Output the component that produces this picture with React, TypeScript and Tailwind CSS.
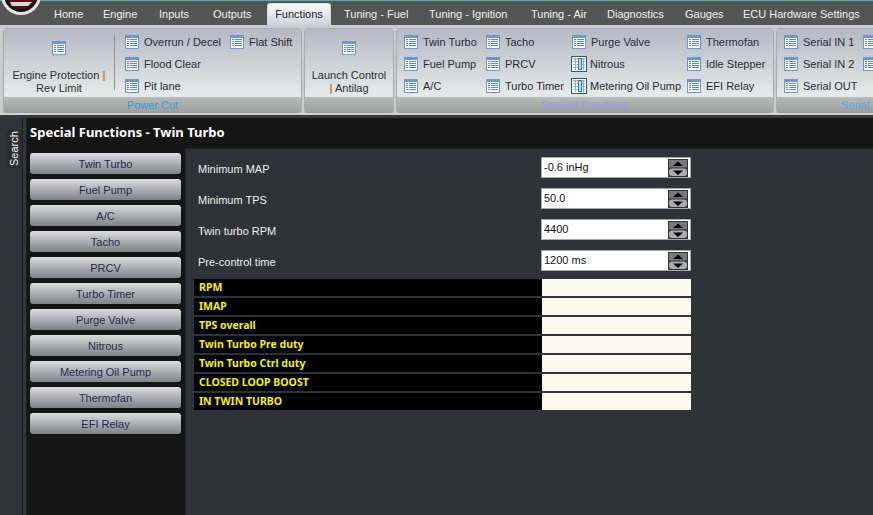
import React from "react";

const font = { fontFamily: '"Liberation Sans", Tahoma, sans-serif' };
const bold = { fontFamily: '"Noto Sans", Tahoma, sans-serif' };

function ListIcon() {
  return (
    <svg width="14" height="14" viewBox="0 0 14 14" className="shrink-0">
      <rect x="0" y="0" width="14" height="14" fill="#6f95cf" />
      <rect x="1" y="3" width="12" height="10" fill="#fbfdff" />
      <rect x="2" y="4" width="2" height="1" fill="#5f88c8" />
      <rect x="5" y="4" width="7" height="1" fill="#5f88c8" />
      <rect x="2" y="6" width="2" height="1" fill="#5f88c8" />
      <rect x="5" y="6" width="7" height="1" fill="#5f88c8" />
      <rect x="2" y="8" width="2" height="1" fill="#5f88c8" />
      <rect x="5" y="8" width="7" height="1" fill="#5f88c8" />
      <rect x="2" y="10" width="2" height="1" fill="#5f88c8" />
      <rect x="5" y="10" width="7" height="1" fill="#5f88c8" />
    </svg>
  );
}

function TableIcon() {
  return (
    <svg width="16" height="16" viewBox="0 0 16 16" className="shrink-0">
      <rect x="0.5" y="0.5" width="15" height="15" fill="#fdfdf6" stroke="#1f5f8f" />
      <rect x="2" y="2" width="12" height="1.5" fill="#e8b24a" />
      <rect x="2" y="5" width="12" height="1" fill="#9cc0dc" />
      <rect x="2" y="8" width="12" height="1" fill="#9cc0dc" />
      <rect x="2" y="11" width="12" height="1" fill="#9cc0dc" />
      <rect x="4" y="2" width="1" height="12" fill="#7fb0d4" />
      <rect x="7" y="2" width="4" height="12" fill="#2f77b4" />
      <rect x="8" y="3" width="2" height="10" fill="#bcd8ec" />
      <rect x="12" y="2" width="1" height="12" fill="#7fb0d4" />
    </svg>
  );
}

function Spinner() {
  return (
    <svg width="20" height="18" viewBox="0 0 20 18" className="shrink-0">
      <rect width="20" height="18" fill="#333438" />
      <rect x="1" y="1" width="18" height="7.5" fill="#77797d" />
      <rect x="1" y="9.5" width="18" height="7.5" rx="3" fill="#a9abae" />
      <path d="M10 2.5 L15 7 L5 7 Z" fill="#000" />
      <path d="M10 16 L15 11.5 L5 11.5 Z" fill="#000" />
    </svg>
  );
}

function Item({ label, table }: { label: string; table?: boolean }) {
  return (
    <div className="flex h-[22px] items-center whitespace-nowrap">
      {table ? (
        <span className="-ml-px mr-[3px] flex">
          <TableIcon />
        </span>
      ) : (
        <span className="mr-[5px] flex">
          <ListIcon />
        </span>
      )}
      <span>{label}</span>
    </div>
  );
}

function Col({ className, children }: { className: string; children: React.ReactNode }) {
  return <div className={`flex flex-col ${className}`}>{children}</div>;
}

function Group({
  className,
  title,
  titleClass,
  children,
}: {
  className: string;
  title: string;
  titleClass: string;
  children: React.ReactNode;
}) {
  return (
    <div
      className={`flex h-[86px] shrink-0 flex-col overflow-hidden rounded-[4px] border border-[#a9adb0] ${className}`}
    >
      <div className="flex h-[68px] bg-gradient-to-b from-[#b4b9c3] to-[#e6ebea]">{children}</div>
      <div className={`flex h-[16px] items-center justify-center overflow-hidden whitespace-nowrap bg-gradient-to-b from-[#b9bbb9] to-[#9c9e9e] text-[11px] leading-none ${titleClass}`}>
        {title}
      </div>
    </div>
  );
}

function Big({ lines }: { lines: React.ReactNode }) {
  return (
    <div className="flex w-full flex-col items-center pt-[12px] text-center leading-[13px]">
      <ListIcon />
      <div className="mt-[14px]">{lines}</div>
    </div>
  );
}

const sideButtons = [
  "Twin Turbo",
  "Fuel Pump",
  "A/C",
  "Tacho",
  "PRCV",
  "Turbo Timer",
  "Purge Valve",
  "Nitrous",
  "Metering Oil Pump",
  "Thermofan",
  "EFI Relay",
];

const fields = [
  ["Minimum MAP", "-0.6 inHg"],
  ["Minimum TPS", "50.0"],
  ["Twin turbo RPM", "4400"],
  ["Pre-control time", "1200 ms"],
];

const rows = [
  "RPM",
  "IMAP",
  "TPS overall",
  "Twin Turbo Pre duty",
  "Twin Turbo Ctrl duty",
  "CLOSED LOOP BOOST",
  "IN TWIN TURBO",
];

const tabs: [string, string][] = [
  ["Home", "w-[49px]"],
  ["Engine", "w-[56px]"],
  ["Inputs", "w-[54px]"],
  ["Outputs", "w-[54px]"],
];

const tabsRight: [string, string][] = [
  ["Tuning - Fuel", "w-[85px]"],
  ["Tuning - Ignition", "w-[102px]"],
  ["Tuning - Air", "w-[76px]"],
  ["Diagnostics", "w-[78px]"],
  ["Gauges", "w-[58px]"],
  ["ECU Hardware Settings", "w-[125px]"],
];

export default function App() {
  return (
    <div
      style={font}
      className="relative flex h-[515px] w-[873px] flex-col overflow-hidden bg-[#2f3238] text-[11px] text-[#2b2b35]"
    >
      <div className="h-px shrink-0 bg-[#3fb8b8]" />

      <svg width="44" height="16" viewBox="0 0 44 16" className="absolute left-0 top-0">
        <circle cx="21" cy="-5" r="20" fill="#e4e4e4" />
        <circle cx="21" cy="-5" r="17" fill="#1c1012" />
        <circle cx="21" cy="-5" r="14" fill="#5a0f16" />
        <path d="M10 2 H32 L28 6 H12 Z" fill="#d8d8d8" />
      </svg>

      <div className="flex h-[24px] shrink-0 items-end bg-[#555555] pl-[54px] text-[#f2f2ea]">
        {tabs.map(([t, w]) => (
          <div key={t} className={`flex h-[22px] items-center whitespace-nowrap ${w}`}>
            {t}
          </div>
        ))}
        <div className="flex h-[22px] w-[64px] items-center justify-center rounded-t-[3px] border border-b-0 border-[#d4d6d8] bg-gradient-to-b from-[#fafbfc] to-[#ccd2dc] text-[#20222a]">
          Functions
        </div>
        <div className="w-[13px]" />
        {tabsRight.map(([t, w]) => (
          <div key={t} className={`flex h-[22px] items-center whitespace-nowrap ${w}`}>
            {t}
          </div>
        ))}
      </div>

      <div className="flex h-[90px] shrink-0 gap-[2px] overflow-hidden border-b-[2px] border-[#cfd1d2] bg-[#c9cbcd] pl-[3px] pt-[3px]">
        <Group className="w-[299px]" title="Power Cut" titleClass="text-[#2f9ae0]">
          <div className="w-[110px]">
            <Big
              lines={
                <>
                  Engine Protection <span className="font-bold text-[#c98a2e]">|</span>
                  <br />
                  Rev Limit
                </>
              }
            />
          </div>
          <div className="mt-[6px] h-[55px] w-px bg-[#8f9296]" />
          <Col className="ml-[10px] w-[105px] pt-[2px]">
            <Item label="Overrun / Decel" />
            <Item label="Flood Clear" />
            <Item label="Pit lane" />
          </Col>
          <Col className="pt-[2px]">
            <Item label="Flat Shift" />
          </Col>
        </Group>

        <Group className="w-[90px]" title="" titleClass="">
          <Big
            lines={
              <>
                Launch Control
                <br />
                <span className="font-bold text-[#c98a2e]">|</span> Antilag
              </>
            }
          />
        </Group>

        <Group className="w-[378px]" title="Special Functions" titleClass="text-[#9a9ae8]">
          <Col className="ml-[7px] w-[82px] pt-[2px]">
            <Item label="Twin Turbo" />
            <Item label="Fuel Pump" />
            <Item label="A/C" />
          </Col>
          <Col className="w-[86px] pt-[2px]">
            <Item label="Tacho" />
            <Item label="PRCV" />
            <Item label="Turbo Timer" />
          </Col>
          <Col className="w-[115px] pt-[2px]">
            <Item label="Purge Valve" />
            <Item label="Nitrous" table />
            <Item label="Metering Oil Pump" table />
          </Col>
          <Col className="pt-[2px]">
            <Item label="Thermofan" />
            <Item label="Idle Stepper" />
            <Item label="EFI Relay" />
          </Col>
        </Group>

        <Group className="w-[200px]" title="Serial" titleClass="justify-start pl-[64px] text-[#5ea4ee]">
          <Col className="ml-[7px] w-[79px] pt-[2px]">
            <Item label="Serial IN 1" />
            <Item label="Serial IN 2" />
            <Item label="Serial OUT" />
          </Col>
          <Col className="pt-[2px]">
            <div className="flex h-[22px] items-center">
              <ListIcon />
            </div>
            <div className="flex h-[22px] items-center">
              <ListIcon />
            </div>
          </Col>
        </Group>
      </div>

      <div className="h-[3px] shrink-0 bg-[#38393b]" />

      <div className="flex min-h-0 flex-1">
        <div className="flex w-[22px] shrink-0 flex-col items-end bg-[#30333a] pt-[12px]">
          <div className="flex h-[38px] w-[16px] rotate-180 items-center justify-center bg-[#2a2d32] text-[11px] text-[#f0f0f0] [writing-mode:vertical-rl]">
            Search
          </div>
        </div>
        <div className="w-[5px] shrink-0 border-l border-r border-[#1c1d20] bg-[#33363c]" />
        <div className="flex min-w-0 flex-1 flex-col bg-[#151515]">
          <div style={bold} className="flex h-[30px] shrink-0 items-center pl-[3px] text-[13px] font-bold text-white">
            Special Functions - Twin Turbo
          </div>
          <div className="flex min-h-0 flex-1">
            <div className="flex w-[158px] shrink-0 flex-col gap-[5px] pl-[3px] pt-[5px]">
              {sideButtons.map((b) => (
                <div
                  key={b}
                  className="flex h-[21px] w-[151px] items-center justify-center rounded-[3px] bg-gradient-to-b from-[#dcdde0] to-[#7f8189] pt-[2px] text-[#27284a]"
                >
                  {b}
                </div>
              ))}
            </div>
            <div className="min-w-0 flex-1 border-l border-t border-[#25272b] bg-[#2f3238] pl-[8px] pt-[8px]">
              <div className="flex flex-col gap-[10px]">
                {fields.map(([l, v]) => (
                  <div key={l} className="flex h-[21px] items-center pl-[4px]">
                    <div className="w-[343px] pt-[3px] text-[#eef0f0]">{l}</div>
                    <div className="flex h-[21px] w-[150px] items-center justify-between border border-[#a6a8ac] bg-white pl-[2px] pr-[2px] text-[#101010]">
                      <span>{v}</span>
                      <Spinner />
                    </div>
                  </div>
                ))}
              </div>
              <div className="mt-[8px] flex w-[497px] flex-col gap-[2px]">
                {rows.map((r) => (
                  <div key={r} className="flex h-[17px]">
                    <div style={bold} className="flex w-[348px] items-center bg-black pl-[5px] text-[10.5px] font-bold text-[#f4f400]">
                      {r}
                    </div>
                    <div className="flex-1 bg-[#fdf8ec]" />
                  </div>
                ))}
              </div>
            </div>
          </div>
        </div>
      </div>
    </div>
  );
}
